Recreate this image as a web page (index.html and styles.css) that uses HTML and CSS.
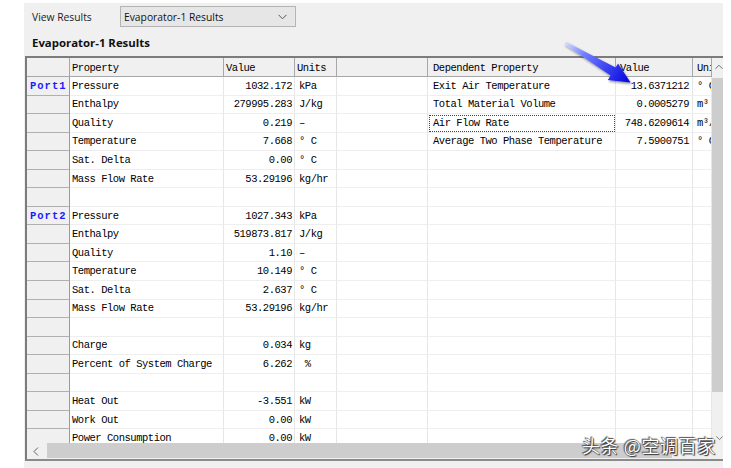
FILE: index.html
```html
<!DOCTYPE html>
<html>
<head>
<meta charset="utf-8">
<link rel="stylesheet" href="styles.css">
</head>
<body>
<div class="panel">
  <div class="toolbar">
    <span class="label">View Results</span>
    <div class="combo"><span>Evaporator-1 Results</span>
      <svg class="chev" width="9" height="6" viewBox="0 0 9 6"><path d="M0.5 0.8 L4.5 4.8 L8.5 0.8" fill="none" stroke="#555" stroke-width="1"/></svg>
    </div>
  </div>
  <div class="title">Evaporator-1 Results</div>
  <div class="grid">
    <div class="view">
      <div class="tablewrap">
        <table class="g">
          <colgroup>
            <col class="c0"><col class="c1"><col class="c2"><col class="c3"><col class="c4"><col class="c5"><col class="c6"><col class="c7">
          </colgroup>
          <tr class="hdr"><th class="corner"></th><th>Property</th><th>Value</th><th>Units</th><th></th><th class="dp">Dependent Property</th><th class="dv">Value</th><th class="du">Units</th></tr>
          <tr><th class="rh port">Port1</th><td class="p">Pressure</td><td class="v">1032.172</td><td class="u">kPa</td><td></td><td class="dp">Exit Air Temperature</td><td class="dv">13.6371212</td><td class="du">° C</td></tr>
          <tr><th class="rh"></th><td class="p">Enthalpy</td><td class="v">279995.283</td><td class="u">J/kg</td><td></td><td class="dp">Total Material Volume</td><td class="dv">0.0005279</td><td class="du">m³</td></tr>
          <tr><th class="rh"></th><td class="p">Quality</td><td class="v">0.219</td><td class="u">–</td><td></td><td class="dp focus">Air Flow Rate</td><td class="dv">748.6209614</td><td class="du">m³/s</td></tr>
          <tr><th class="rh"></th><td class="p">Temperature</td><td class="v">7.668</td><td class="u">° C</td><td></td><td class="dp">Average Two Phase Temperature</td><td class="dv">7.5900751</td><td class="du">° C</td></tr>
          <tr><th class="rh"></th><td class="p">Sat. Delta</td><td class="v">0.00</td><td class="u">° C</td><td></td><td></td><td></td><td></td></tr>
          <tr><th class="rh"></th><td class="p">Mass Flow Rate</td><td class="v">53.29196</td><td class="u">kg/hr</td><td></td><td></td><td></td><td></td></tr>
          <tr><th class="rh"></th><td></td><td></td><td></td><td></td><td></td><td></td><td></td></tr>
          <tr><th class="rh port">Port2</th><td class="p">Pressure</td><td class="v">1027.343</td><td class="u">kPa</td><td></td><td></td><td></td><td></td></tr>
          <tr><th class="rh"></th><td class="p">Enthalpy</td><td class="v">519873.817</td><td class="u">J/kg</td><td></td><td></td><td></td><td></td></tr>
          <tr><th class="rh"></th><td class="p">Quality</td><td class="v">1.10</td><td class="u">–</td><td></td><td></td><td></td><td></td></tr>
          <tr><th class="rh"></th><td class="p">Temperature</td><td class="v">10.149</td><td class="u">° C</td><td></td><td></td><td></td><td></td></tr>
          <tr><th class="rh"></th><td class="p">Sat. Delta</td><td class="v">2.637</td><td class="u">° C</td><td></td><td></td><td></td><td></td></tr>
          <tr><th class="rh"></th><td class="p">Mass Flow Rate</td><td class="v">53.29196</td><td class="u">kg/hr</td><td></td><td></td><td></td><td></td></tr>
          <tr><th class="rh"></th><td></td><td></td><td></td><td></td><td></td><td></td><td></td></tr>
          <tr><th class="rh"></th><td class="p">Charge</td><td class="v">0.034</td><td class="u">kg</td><td></td><td></td><td></td><td></td></tr>
          <tr><th class="rh"></th><td class="p">Percent of System Charge</td><td class="v">6.262</td><td class="u">&nbsp;%</td><td></td><td></td><td></td><td></td></tr>
          <tr><th class="rh"></th><td></td><td></td><td></td><td></td><td></td><td></td><td></td></tr>
          <tr><th class="rh"></th><td class="p">Heat Out</td><td class="v">-3.551</td><td class="u">kW</td><td></td><td></td><td></td><td></td></tr>
          <tr><th class="rh"></th><td class="p">Work Out</td><td class="v">0.00</td><td class="u">kW</td><td></td><td></td><td></td><td></td></tr>
          <tr><th class="rh"></th><td class="p">Power Consumption</td><td class="v">0.00</td><td class="u">kW</td><td></td><td></td><td></td><td></td></tr>
          <tr><th class="rh"></th><td></td><td></td><td></td><td></td><td></td><td></td><td></td></tr>
        </table>
      </div>
      <div class="vscroll">
        <div class="varrow up"><svg width="9" height="6" viewBox="0 0 9 6"><path d="M0.5 5 L4.5 1 L8.5 5" fill="none" stroke="#606060" stroke-width="1"/></svg></div>
        <div class="vthumb"></div>
        <div class="vtrack"></div>
        <div class="varrow down"><svg width="9" height="6" viewBox="0 0 9 6"><path d="M0.5 1 L4.5 5 L8.5 1" fill="none" stroke="#606060" stroke-width="1"/></svg></div>
      </div>
    </div>
    <div class="hscroll">
      <div class="harrow"><svg width="6" height="9" viewBox="0 0 6 9"><path d="M5 0.5 L1 4.5 L5 8.5" fill="none" stroke="#606060" stroke-width="1"/></svg></div>
      <div class="hthumb"></div>
      <div class="htrack"></div>
      <div class="hcorner"></div>
    </div>
  </div>
</div>

<svg class="arrow" width="85" height="55" viewBox="555 35 85 55">
  <defs>
    <linearGradient id="ag" x1="565" y1="43" x2="630" y2="82" gradientUnits="userSpaceOnUse">
      <stop offset="0" stop-color="#d6deff"/>
      <stop offset="0.3" stop-color="#6f7dff"/>
      <stop offset="1" stop-color="#0505e0"/>
    </linearGradient>
    <filter id="sh" x="-20%" y="-20%" width="140%" height="140%">
      <feDropShadow dx="1" dy="1.5" stdDeviation="1" flood-color="#000" flood-opacity="0.45"/>
    </filter>
  </defs>
  <polygon filter="url(#sh)" fill="url(#ag)" points="564.2,44.2 565.8,41.8 615.6,67.6 618.0,63.5 630.5,82.5 607.8,80.0 610.6,75.6"/>
</svg>

<div class="watermark">头条 @空调百家</div>
</body>
</html>
```

FILE: styles.css
```css
html, body {
  margin: 0;
  padding: 0;
  background: #fff;
}
body {
  width: 731px;
  height: 468px;
  overflow: hidden;
  position: relative;
  font-family: "Open Sans", "Noto Sans", sans-serif;
}
.panel {
  margin: 3px 0 0 24px;
  width: 699px;
  height: 465px;
  background: #f0f0f0;
  display: flex;
  flex-direction: column;
}
.toolbar {
  display: flex;
  align-items: center;
  height: 21px;
  margin-top: 3px;
  padding-left: 8px;
}
.toolbar .label {
  width: 88px;
  font-size: 10.3px;
  color: #222;
}
.combo {
  width: 176px;
  height: 21px;
  box-sizing: border-box;
  border: 1px solid #b4b4b4;
  background: #e6e6e6;
  display: flex;
  align-items: center;
  justify-content: space-between;
  padding: 0 8px 0 3px;
  font-size: 10.3px;
  color: #111;
}
.title {
  margin-top: 8px;
  height: 16px;
  line-height: 16px;
  padding-left: 8px;
  font-size: 11.4px;
  font-weight: 700;
  color: #111;
}
.grid {
  margin: 5px 0 0 1px;
  width: 698px;
  border-left: 2px solid #7c7c7c;
  border-top: 2px solid #7c7c7c;
  border-bottom: 2px solid #8a8a8a;
  box-sizing: border-box;
  overflow: hidden;
  background: #fff;
}
.view {
  display: flex;
  height: 385px;
}
.tablewrap {
  width: 685px;
  height: 385px;
  overflow: hidden;
  flex: none;
}
table.g {
  border-collapse: separate;
  border-spacing: 0;
  table-layout: fixed;
  width: 685px;
  font-family: "Liberation Mono", "DejaVu Sans Mono", monospace;
  font-size: 10.5px;
  letter-spacing: -0.47px;
  color: #000;
}
.c0 { width: 43px; }
.c1 { width: 154px; }
.c2 { width: 71px; }
.c3 { width: 42px; }
.c4 { width: 91px; }
.c5 { width: 188px; }
.c6 { width: 77px; }
.c7 { width: 19px; }
.g tr { height: 18.55px; }
.g tr.hdr { height: 19px; }
.g td, .g th {
  padding: 0;
  line-height: 14px;
  white-space: nowrap;
  overflow: hidden;
  text-overflow: clip;
  border-right: 1px solid #e6e6e6;
  border-bottom: 1px solid #eeeeee;
  text-align: left;
  font-weight: 400;
}
.g tr.hdr th {
  background: #f0f0f0;
  border-right: 1px solid #a8a8a8;
  border-bottom: 1px solid #a8a8a8;
  padding: 2px 0 0 2px;
}
.g tr.hdr th.dp { padding-left: 5px; }
.g tr.hdr th.dv { padding-left: 4px; }
.g tr.hdr th.du { padding-left: 4px; }
.g th.rh {
  background: #f0f0f0;
  border-right: 1px solid #9a9a9a;
  border-bottom: 1px solid #b0b0b0;
}
.g th.port {
  color: #1c1cff;
  font-weight: 700;
  letter-spacing: 1px;
  padding-left: 3px;
}
.g td.p { padding-left: 2px; }
.g td.v { text-align: right; padding-right: 2px; }
.g td.u { padding-left: 4px; }
.g td.dp { padding-left: 5px; }
.g td.dv { text-align: right; padding-right: 3px; }
.g td.du { padding-left: 4px; }
.g td.focus {
  outline: 1px dotted #444;
  outline-offset: -2px;
}
.vscroll {
  width: 11px;
  flex: none;
  background: #f0f0f0;
  display: flex;
  flex-direction: column;
}
.varrow {
  height: 17px;
  display: flex;
  align-items: center;
  padding-left: 3px;
  flex: none;
}
.vthumb {
  margin-top: 3px;
  height: 314px;
  background: #cdcdcd;
  flex: none;
}
.vtrack { flex: 1; }
.varrow.down { height: 8px; align-items: flex-start; padding-left: 4px; }
.hscroll {
  height: 16px;
  display: flex;
  background: #f0f0f0;
}
.harrow {
  width: 20px;
  display: flex;
  align-items: center;
  padding-left: 6px;
  box-sizing: border-box;
  flex: none;
}
.hthumb {
  width: 625px;
  margin: 0 0 1px;
  background: #cdcdcd;
  flex: none;
}
.htrack { flex: 1; }
.hcorner { width: 11px; flex: none; }
.arrow {
  position: absolute;
  left: 555px;
  top: 35px;
}
.watermark {
  position: absolute;
  left: 582px;
  top: 434px;
  font-family: "Noto Sans CJK SC", sans-serif;
  font-size: 18px;
  letter-spacing: 0.6px;
  line-height: 22px;
  color: #fff;
  text-shadow: 0 0 1px #222, 1px 1px 1px #333, -1px -1px 1px #555;
  white-space: nowrap;
}
```
